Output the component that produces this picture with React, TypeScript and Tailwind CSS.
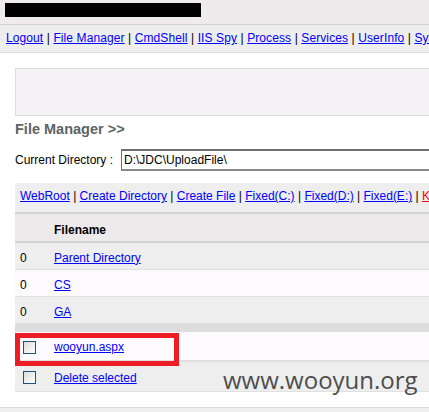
import React from "react";

const Sep = () => <span className="text-black"> | </span>;

const L = ({ children, red }: { children: React.ReactNode; red?: boolean }) => (
  <a href="#" className={"underline " + (red ? "text-[#ff0000]" : "text-[#0000ff]")}>
    {children}
  </a>
);

const Check = () => (
  <span className="inline-block w-[13px] h-[13px] border border-[#1c5180] bg-gradient-to-br from-[#dcdcd7] to-white" />
);

export default function App() {
  const nav = ["Logout", "File Manager", "CmdShell", "IIS Spy", "Process", "Services", "UserInfo", "SysInfo"];
  const tools = ["WebRoot", "Create Directory", "Create File", "Fixed(C:)", "Fixed(D:)", "Fixed(E:)"];
  return (
    <div
      className="relative w-[429px] h-[412px] overflow-hidden bg-white text-[12px] leading-none"
      style={{ fontFamily: '"Liberation Sans", Arial, sans-serif' }}
    >
      <div className="h-[25px] bg-[#efebed] border-b border-[#d2d2d2] pt-[3px] pl-[5px]">
        <div className="w-[196px] h-[14px] bg-black" />
      </div>
      <div className="h-[28px] bg-[#eeeeee] border-b border-[#dddddd] pl-[6px] pt-[7px] whitespace-nowrap overflow-hidden tracking-[0.1px]">
        {nav.map((n, i) => (
          <React.Fragment key={n}>
            {i > 0 && <Sep />}
            <L>{n}</L>
          </React.Fragment>
        ))}
      </div>
      <div className="pl-[15px] pt-[15px]">
        <div className="w-[500px] h-[48px] border border-[#dddddd] bg-[#f7f2f5]" />
        <div className="mt-[6px] text-[14.5px] font-bold text-[#5b6466] h-[14px]">File Manager &gt;&gt;</div>
        <div className="mt-[13px] flex items-center h-[22px] whitespace-nowrap">
          <span className="text-black shrink-0">Current Directory :</span>
          <div className="ml-[8px] shrink-0 w-[400px] h-[22px] border-t-2 border-b-2 border-l border-t-[#6f6f6f] border-b-[#8a8a8a] border-l-[#6f6f6f] flex items-center pl-[2px]">
            D:\JDC\UploadFile\
          </div>
        </div>
        <div className="mt-[12px] w-[500px]">
          <div className="h-[31px] bg-[#eeeeee] pl-[5px] pt-[7px] whitespace-nowrap border-b-2 border-[#d6d2d4]">
            {tools.map((n, i) => (
              <React.Fragment key={n}>
                {i > 0 && <Sep />}
                <L>{n}</L>
              </React.Fragment>
            ))}
            <Sep />
            <L red>Kill Me</L>
          </div>
          <div className="h-[29px] bg-[#edeaec] border-b-2 border-[#d6d2d4] flex items-center pt-[5px]">
            <span className="w-[39px]" />
            <span className="font-bold text-black">Filename</span>
          </div>
          {[
            ["Parent Directory", "bg-[#eeeeee]"],
            ["CS", "bg-[#fdfafd]"],
            ["GA", "bg-[#eeeeee]"],
          ].map(([n, bg]) => (
            <div key={n} className={"h-[27px] flex items-center pt-[3px] border-b border-[#e0e0e0] " + bg}>
              <span className="w-[39px] pl-[5px]">0</span>
              <L>{n}</L>
            </div>
          ))}
          <div className="h-[8px] bg-[#dddddd]" />
          <div className="h-[30px] bg-[#fdfafd] border-b-2 border-[#e0e0e0] flex items-center pt-[2px]">
            <span className="w-[39px] pl-[8px] flex">
              <Check />
            </span>
            <L>wooyun.aspx</L>
          </div>
          <div className="h-[30px] bg-[#eeeeee] border-b border-[#e0e0e0] flex items-center pt-[2px]">
            <span className="w-[39px] pl-[8px] flex">
              <Check />
            </span>
            <L>Delete selected</L>
          </div>
        </div>
      </div>
      <div className="absolute left-0 right-0 top-[407px] bottom-0 bg-[#eeeeee] border-t border-[#dddddd]" />
      <div className="absolute left-[15px] top-[333px] w-[164px] h-[33px] border-[5px] border-[#ee1c25]" />
      <div
        className="absolute left-[223px] top-[368px] text-[24px] text-[#3c3c3c] opacity-90 leading-none"
        style={{ fontFamily: '"Open Sans", sans-serif' }}
      >
        www.wooyun.org
      </div>
    </div>
  );
}
